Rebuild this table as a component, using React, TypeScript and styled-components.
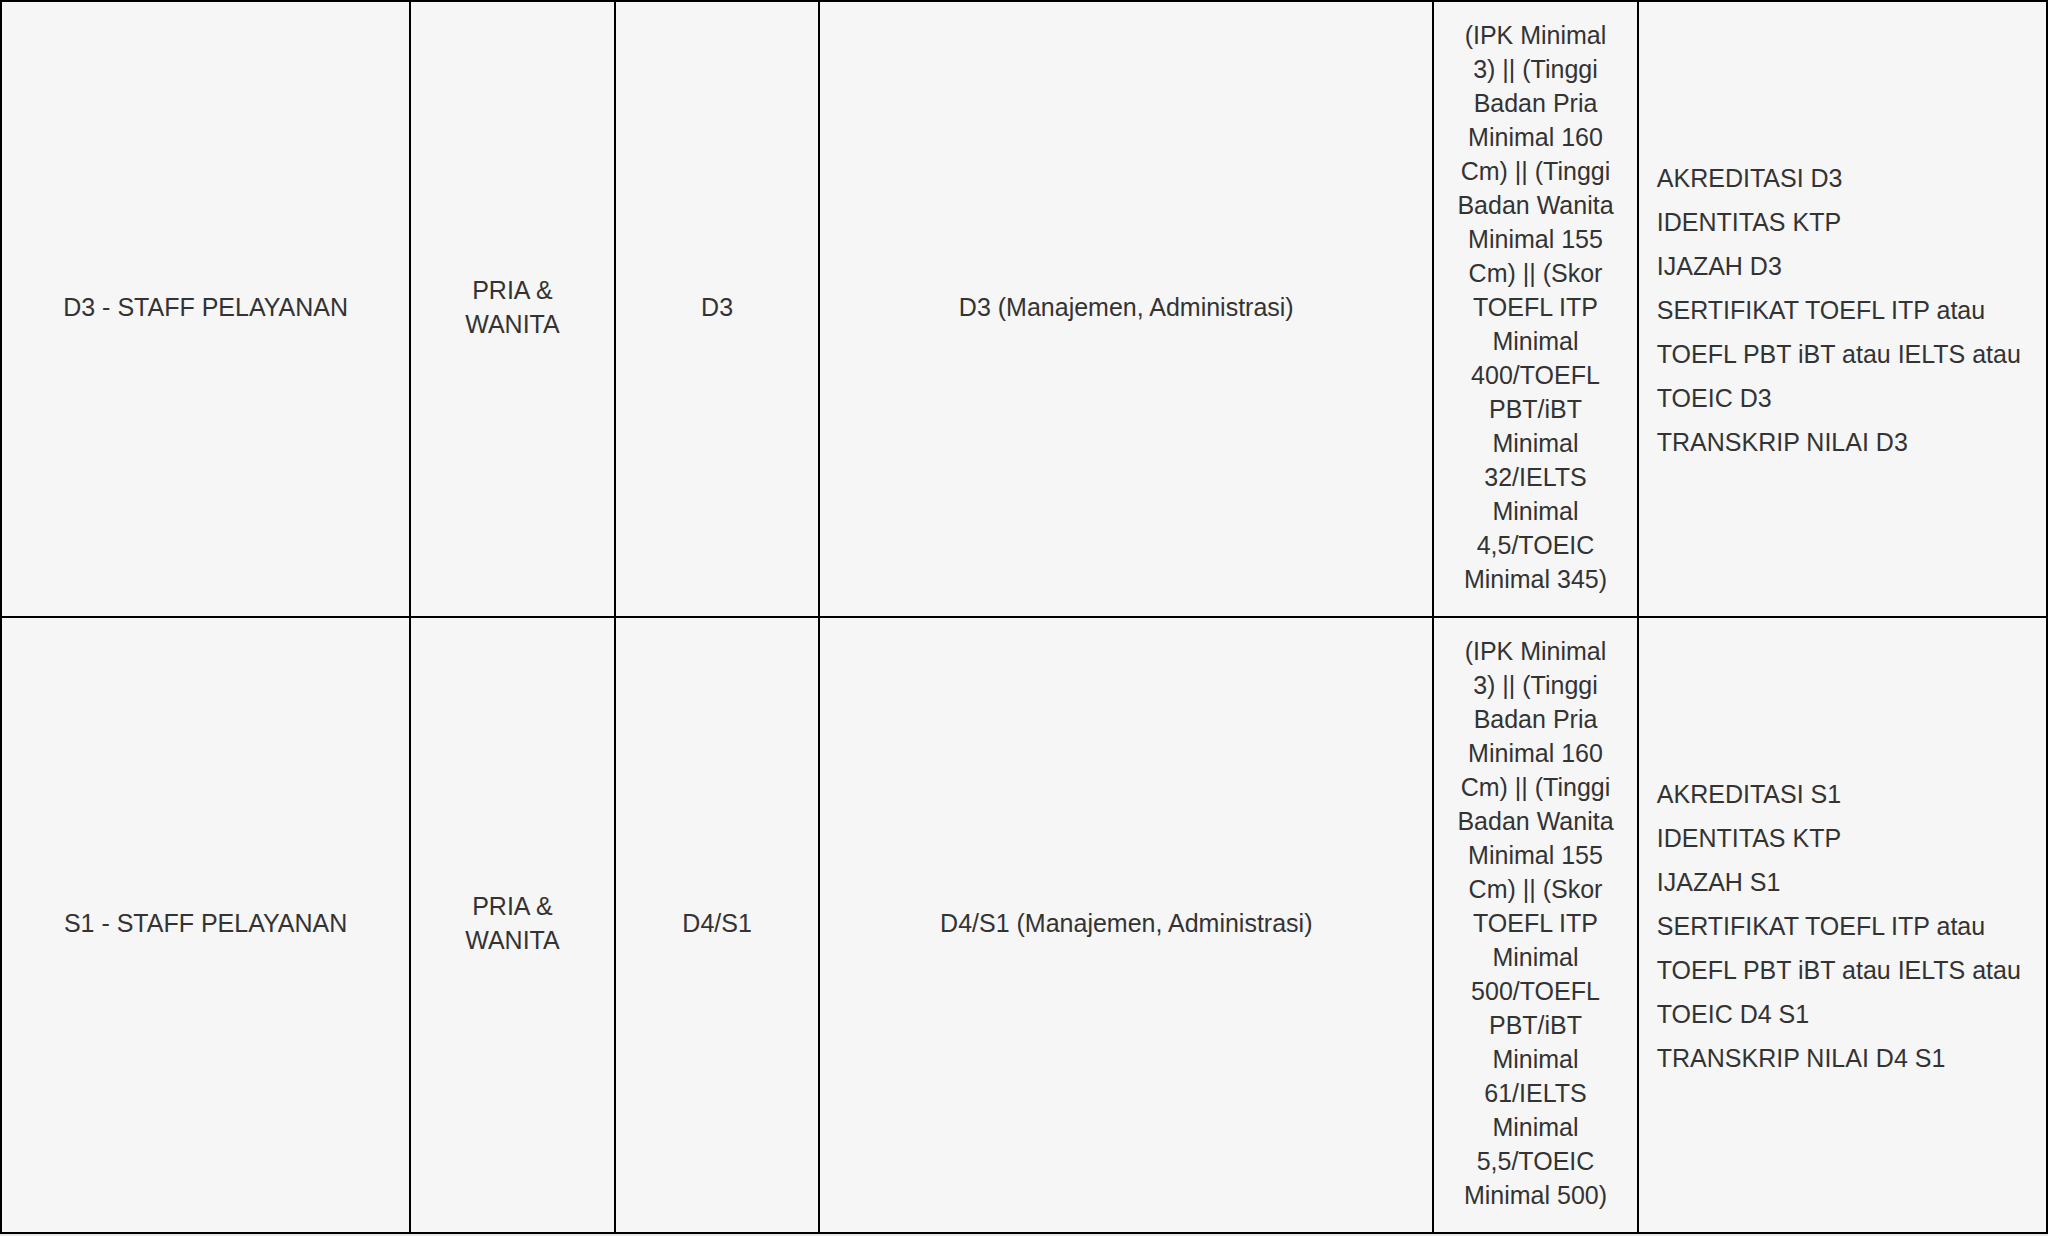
import { FunctionComponent } from "react"
import styled, { createGlobalStyle } from 'styled-components'


const GlobalStyle = createGlobalStyle`
    html, body{
        margin: 0;
        padding: 0;
        background-color: #e6e6e6;
        font-family: "Liberation Sans", Arial, Helvetica, sans-serif;
    }
`

const Table = styled.div`
    display: grid;
    grid-template-columns: 20fr 10fr 10fr 30fr 10fr 20fr;
    width: 100%;
    box-sizing: border-box;
    border-top: 2px solid #000;
    border-left: 2px solid #000;
`

const Cell = styled.div<{ $left?: boolean; $leading?: number }>`
    display: flex;
    align-items: center;
    justify-content: ${p => p.$left ? 'flex-start' : 'center'};
    min-width: 0;
    padding: ${p => p.$left ? '19px 18px 17px' : '16px 18px 20px'};
    background-color: #f6f6f6;
    border-right: 2px solid #000;
    border-bottom: 2px solid #000;
    color: #333;
    font-size: 25px;
    line-height: ${p => p.$leading ?? 34}px;
    text-align: ${p => p.$left ? 'left' : 'center'};
`

const CellText = styled.div`
    max-width: 100%;
`

const DocList = styled.div`
    display: flex;
    flex-direction: column;
`

const Doc = styled.span`
    display: block;
`


interface Row {
    jabatan: string
    gender: string
    jenjang: string
    jurusan: string
    syarat: string
    dokumen: string[]
}

const rows: Row[] = [
    {
        jabatan: 'D3 - STAFF PELAYANAN',
        gender: 'PRIA & WANITA',
        jenjang: 'D3',
        jurusan: 'D3 (Manajemen, Administrasi)',
        syarat: '(IPK Minimal 3) || (Tinggi Badan Pria Minimal 160 Cm) || (Tinggi Badan Wanita Minimal 155 Cm) || (Skor TOEFL ITP Minimal 400/TOEFL PBT/iBT Minimal 32/IELTS Minimal 4,5/TOEIC Minimal 345)',
        dokumen: [
            'AKREDITASI D3',
            'IDENTITAS KTP',
            'IJAZAH D3',
            'SERTIFIKAT TOEFL ITP atau TOEFL PBT iBT atau IELTS atau TOEIC D3',
            'TRANSKRIP NILAI D3',
        ],
    },
    {
        jabatan: 'S1 - STAFF PELAYANAN',
        gender: 'PRIA & WANITA',
        jenjang: 'D4/S1',
        jurusan: 'D4/S1 (Manajemen, Administrasi)',
        syarat: '(IPK Minimal 3) || (Tinggi Badan Pria Minimal 160 Cm) || (Tinggi Badan Wanita Minimal 155 Cm) || (Skor TOEFL ITP Minimal 500/TOEFL PBT/iBT Minimal 61/IELTS Minimal 5,5/TOEIC Minimal 500)',
        dokumen: [
            'AKREDITASI S1',
            'IDENTITAS KTP',
            'IJAZAH S1',
            'SERTIFIKAT TOEFL ITP atau TOEFL PBT iBT atau IELTS atau TOEIC D4 S1',
            'TRANSKRIP NILAI D4 S1',
        ],
    },
]


const App: FunctionComponent = () => {
    return (
        <>
            <GlobalStyle />
            <Table>
                {rows.map((row) => (
                    <div key={row.jabatan} style={{ display: 'contents' }}>
                        <Cell><CellText>{row.jabatan}</CellText></Cell>
                        <Cell><CellText>{row.gender}</CellText></Cell>
                        <Cell><CellText>{row.jenjang}</CellText></Cell>
                        <Cell><CellText>{row.jurusan}</CellText></Cell>
                        <Cell><CellText>{row.syarat}</CellText></Cell>
                        <Cell $left $leading={44}>
                            <DocList>
                                {row.dokumen.map((d) => <Doc key={d}>{d}</Doc>)}
                            </DocList>
                        </Cell>
                    </div>
                ))}
            </Table>
        </>
    )
}

export default App
